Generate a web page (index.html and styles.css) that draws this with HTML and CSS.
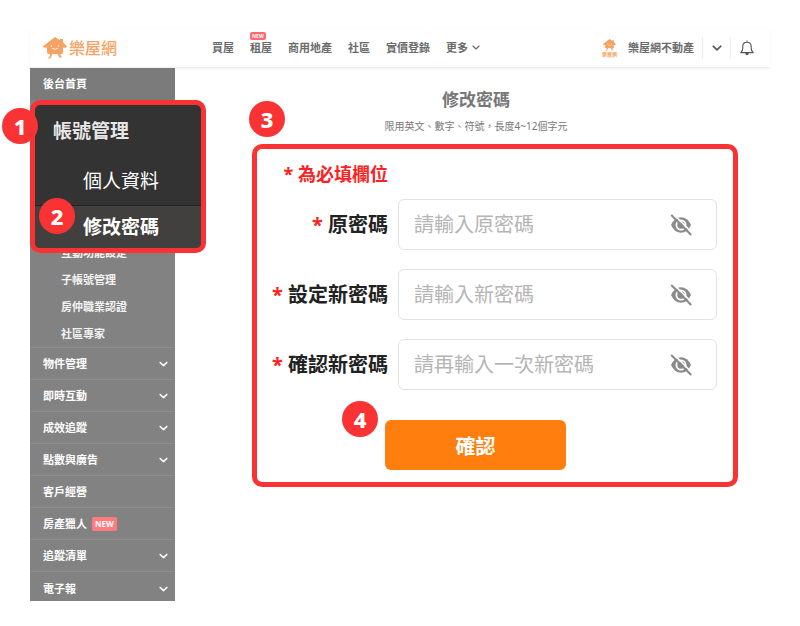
FILE: index.html
```html
<!DOCTYPE html>
<html lang="zh-Hant">

<head>
  <meta charset="utf-8">
  <meta name="viewport" content="width=device-width, initial-scale=1">
  <title>修改密碼</title>
  <link rel="stylesheet" href="styles.css">
</head>

<body>
  <!-- shared icons -->
  <svg class="sprite" width="0" height="0" aria-hidden="true">
    <symbol id="house" viewBox="0 0 24 22">
      <path fill="currentColor" d="M12 0 L17 3.2 V2 h3 v3.4 L24 9.2 Q23.5 11 21.8 10.8 L20 10.4 V15 Q20 17 18 17 h-1 l1.2 2.6 q1 .4 .8 1 h-2.8 L14.6 17 H9.4 L8 20.6 q-.8 1.6 -3 1 q.2 -1.2 1.4 -1.4 L7.2 17 H6 Q4 17 4 15 V10.6 L2.2 10.8 Q.5 11 0 9.2 Z" />
      <circle cx="8.4" cy="9" r=".8" fill="#fff" />
      <circle cx="15.6" cy="9" r=".8" fill="#fff" />
      <path fill="none" stroke="#fff" stroke-width=".9" stroke-linecap="round" d="M9.4 11.4 Q12 13.6 14.6 11.4" />
    </symbol>
    <symbol id="chevron" viewBox="0 0 10 6">
      <path fill="none" stroke="currentColor" stroke-width="1.6" stroke-linecap="round" stroke-linejoin="round" d="M1.2 1.2 L5 4.8 L8.8 1.2" />
    </symbol>
    <symbol id="eye-off" viewBox="0 0 22 22">
      <path fill="#8a8a8a" d="M1 11 Q4.6 3.2 11 3.2 T21 11 Q17.4 18.8 11 18.8 T1 11 Z" />
      <circle cx="11" cy="11" r="4.6" fill="none" stroke="#fff" stroke-width="1.8" />
      <path stroke="#fff" stroke-width="1.6" d="M3 -.4 L23.2 19.8" />
      <path stroke="#8a8a8a" stroke-width="2" d="M1.2 1 L21.2 21" />
    </symbol>
  </svg>

  <div class="page">
    <header class="header">
      <a class="logo" href="#">
        <svg class="logo-icon"><use href="#house" /></svg>
        樂屋網
      </a>
      <nav class="nav">
        <a href="#">買屋</a>
        <a href="#" class="has-tag">租屋<span class="nav-tag">NEW</span></a>
        <a href="#">商用地產</a>
        <a href="#">社區</a>
        <a href="#">實價登錄</a>
        <a href="#">更多 <svg class="nav-arrow"><use href="#chevron" /></svg></a>
      </nav>
      <div class="user">
        <span class="avatar">
          <svg class="avatar-icon"><use href="#house" /></svg>
          <span class="avatar-text">樂屋網</span>
        </span>
        <span class="user-name">樂屋網不動產</span>
        <button class="icon-btn" type="button" aria-label="選單">
          <svg class="user-arrow"><use href="#chevron" /></svg>
        </button>
        <button class="icon-btn" type="button" aria-label="通知">
          <svg class="bell" viewBox="0 0 14 16" fill="none" stroke="#555" stroke-width="1.1" stroke-linejoin="round">
            <path d="M7 .6 V2 M.8 12.6 Q2.8 10.8 2.8 8 V6.4 Q2.8 2.2 7 2.2 T11.2 6.4 V8 Q11.2 10.8 13.2 12.6 Z" />
            <path fill="#555" d="M5.8 13.2 H8.2 Q8 14.6 7 14.6 T5.8 13.2 Z" />
          </svg>
        </button>
      </div>
    </header>

    <div class="content">
      <aside class="sidebar">
        <a class="menu-item home" href="#">後台首頁</a>

        <div class="account">
          <div class="highlight">
            <a class="account-title" href="#">帳號管理</a>
            <a class="account-link" href="#">個人資料</a>
            <a class="account-link active" href="#">修改密碼</a>
            <span class="step step-1">1</span>
            <span class="step step-2">2</span>
          </div>
          <div class="submenu">
            <a href="#">互動功能設定</a>
            <a href="#">子帳號管理</a>
            <a href="#">房仲職業認證</a>
            <a href="#">社區專家</a>
          </div>
        </div>

        <a class="menu-item" href="#">物件管理 <svg class="menu-arrow"><use href="#chevron" /></svg></a>
        <a class="menu-item" href="#">即時互動 <svg class="menu-arrow"><use href="#chevron" /></svg></a>
        <a class="menu-item" href="#">成效追蹤 <svg class="menu-arrow"><use href="#chevron" /></svg></a>
        <a class="menu-item" href="#">點數與廣告 <svg class="menu-arrow"><use href="#chevron" /></svg></a>
        <a class="menu-item" href="#">客戶經營</a>
        <a class="menu-item" href="#">房產獵人 <span class="menu-tag">NEW</span></a>
        <a class="menu-item" href="#">追蹤清單 <svg class="menu-arrow"><use href="#chevron" /></svg></a>
        <a class="menu-item last" href="#">電子報 <svg class="menu-arrow"><use href="#chevron" /></svg></a>
      </aside>

      <main class="main">
        <h1>修改密碼</h1>
        <p class="hint">限用英文、數字、符號&#65292;長度4~12個字元</p>

        <form class="form">
          <span class="step step-3">3</span>
          <p class="required-note">* 為必填欄位</p>

          <div class="field">
            <label for="old-password"><span class="star">*</span> 原密碼</label>
            <div class="input-box">
              <input type="password" id="old-password" placeholder="請輸入原密碼">
              <button class="eye" type="button" aria-label="顯示密碼"><svg><use href="#eye-off" /></svg></button>
            </div>
          </div>

          <div class="field">
            <label for="new-password"><span class="star">*</span> 設定新密碼</label>
            <div class="input-box">
              <input type="password" id="new-password" placeholder="請輸入新密碼">
              <button class="eye" type="button" aria-label="顯示密碼"><svg><use href="#eye-off" /></svg></button>
            </div>
          </div>

          <div class="field">
            <label for="confirm-password"><span class="star">*</span> 確認新密碼</label>
            <div class="input-box">
              <input type="password" id="confirm-password" placeholder="請再輸入一次新密碼">
              <button class="eye" type="button" aria-label="顯示密碼"><svg><use href="#eye-off" /></svg></button>
            </div>
          </div>

          <div class="actions">
            <div class="submit-wrap">
              <button class="submit" type="submit">確認</button>
              <span class="step step-4">4</span>
            </div>
          </div>
        </form>
      </main>
    </div>
  </div>
</body>

</html>
```
FILE: styles.css
```css
* {
  box-sizing: border-box;
}

body {
  margin: 0;
  background-color: #fff;
  color: #6b6b6b;
  font-family: "Noto Sans", "Noto Sans CJK TC", sans-serif;
  font-size: 11px;
  line-height: 20px;
}

a {
  color: inherit;
  text-decoration: none;
}

h1,
p {
  margin: 0;
}

button {
  border: none;
  padding: 0;
  background: none;
  font-family: inherit;
  cursor: pointer;
}

svg {
  display: block;
}

.sprite {
  position: absolute;
}

.page {
  padding: 28px 30px 24px;
}

/* Header */
.header {
  display: flex;
  align-items: center;
  height: 40px;
  padding: 0 16px 0 13px;
  border-bottom: 1px solid #eee;
  box-shadow: 0 1px 3px rgba(0, 0, 0, 0.06);
  font-weight: 700;
}

.logo {
  display: flex;
  align-items: center;
  gap: 2px;
  color: #f6a263;
  font-size: 16px;
  font-weight: 500;
}

.logo-icon {
  width: 24px;
  height: 22px;
}

.nav {
  display: flex;
  gap: 16px;
  margin-left: 95px;
}

.nav a {
  display: flex;
  align-items: center;
  gap: 4px;
}

.has-tag {
  position: relative;
}

.nav-tag {
  position: absolute;
  top: -6px;
  left: 0;
  padding: 0 2px;
  border-radius: 2px;
  background-color: #fb6a70;
  color: #fff;
  font-size: 5px;
  font-weight: 700;
  line-height: 8px;
}

.nav-arrow {
  width: 8px;
  height: 5px;
}

.user {
  display: flex;
  align-items: center;
  margin-left: auto;
}

.avatar {
  display: flex;
  flex-direction: column;
  align-items: center;
  margin-right: 11px;
  color: #f6a263;
}

.avatar-icon {
  width: 13px;
  height: 12px;
}

.avatar-text {
  font-size: 5px;
  font-weight: 700;
  line-height: 6px;
}

.user-name {
  margin-right: 8px;
}

.icon-btn {
  display: flex;
  align-items: center;
  height: 22px;
  padding-left: 9px;
  border-left: 1px solid #eee;
  color: #555;
}

.user-arrow {
  width: 10px;
  height: 6px;
  margin-right: 8px;
}

.bell {
  width: 14px;
  height: 16px;
}

/* Sidebar */
.content {
  display: flex;
  align-items: flex-start;
  gap: 7px;
}

.sidebar {
  flex: 0 0 145px;
  background-color: #828282;
  color: #fff;
}

.menu-item {
  display: flex;
  align-items: center;
  height: 32px;
  padding: 0 7px 0 13px;
  border-top: 1px solid #8e8e8e;
  font-weight: 700;
}

.home {
  border-top: none;
  background-color: #7b7b7b;
}

.last {
  height: 30px;
  padding-top: 4px;
}

.menu-arrow {
  width: 9px;
  height: 6px;
  margin-left: auto;
}

.menu-tag {
  margin-left: 5px;
  padding: 0 3px;
  border-radius: 2px;
  background-color: #ff7b80;
  font-size: 8px;
  line-height: 14px;
}

/* The highlight box is wider than the sidebar and covers the submenu's top */
.highlight {
  position: relative;
  z-index: 1;
  margin-right: -31px;
  border: 5px solid #f93333;
  border-radius: 10px;
  background-color: #333;
  font-size: 19px;
}

.account-title,
.account-link {
  display: block;
  line-height: 53px;
}

.account-title {
  padding-left: 18px;
  color: #e6e6e6;
  font-weight: 700;
}

.account-link {
  padding-left: 48px;
  line-height: 47px;
}

.active {
  border-top: 1px solid #222;
  border-radius: 0 0 5px 5px;
  background-color: #42403e;
  font-weight: 700;
  line-height: 42px;
}

.submenu {
  margin-top: -14px;
}

.submenu a {
  display: block;
  padding-left: 31px;
  color: #f2f2f2;
  font-weight: 700;
  line-height: 27px;
}

/* Step numbers */
.step {
  position: absolute;
  width: 36px;
  height: 36px;
  border-radius: 50%;
  background-color: #f93333;
  color: #fff;
  font-size: 22px;
  font-weight: 800;
  line-height: 36px;
  text-align: center;
}

.step-1 {
  top: 3px;
  left: -33px;
}

.step-2 {
  top: 93px;
  left: 4px;
}

.step-3 {
  top: -48px;
  left: -8px;
}

.step-4 {
  top: -19px;
  left: -43px;
}

/* Password form */
.main {
  flex: 1;
  min-width: 0;
  padding-top: 20px;
}

h1 {
  color: #777;
  font-size: 17px;
  font-weight: 700;
  line-height: 24px;
  text-align: center;
}

.hint {
  margin-top: 6px;
  color: #777;
  font-size: 10px;
  line-height: 16px;
  text-align: center;
}

.form {
  position: relative;
  margin: 10px 32px 0 70px;
  padding: 13px 16px 12px 15px;
  border: 5px solid #f93333;
  border-radius: 10px;
}

.required-note {
  width: 116px;
  color: #fb2222;
  font-size: 18px;
  font-weight: 700;
  line-height: 24px;
  text-align: right;
  white-space: nowrap;
}

.field {
  display: grid;
  grid-template-columns: 116px minmax(0, 1fr);
  align-items: center;
  gap: 10px;
  margin-top: 19px;
}

.required-note + .field {
  margin-top: 13px;
}

.field label {
  color: #222;
  font-size: 20px;
  font-weight: 700;
  line-height: 24px;
  text-align: right;
  white-space: nowrap;
}

.star {
  color: #fb2222;
}

.input-box {
  display: flex;
  align-items: center;
  height: 51px;
  padding: 0 24px 0 15px;
  border: 1px solid #e2e2e2;
  border-radius: 6px;
}

.input-box input {
  flex: 1;
  min-width: 0;
  padding: 0;
  border: none;
  outline: none;
  background: none;
  color: #333;
  font-family: inherit;
  font-size: 20px;
}

.input-box input::placeholder {
  color: #b5b5b5;
}

.eye svg {
  width: 22px;
  height: 22px;
}

.actions {
  display: flex;
  justify-content: center;
  margin-top: 30px;
  padding-right: 38px;
}

.submit-wrap {
  position: relative;
}

.submit {
  width: 181px;
  height: 50px;
  border-radius: 6px;
  background-color: #ff7e0d;
  color: #fff;
  font-size: 20px;
  font-weight: 700;
}

.submit:hover {
  background-color: #e86f05;
}
```
